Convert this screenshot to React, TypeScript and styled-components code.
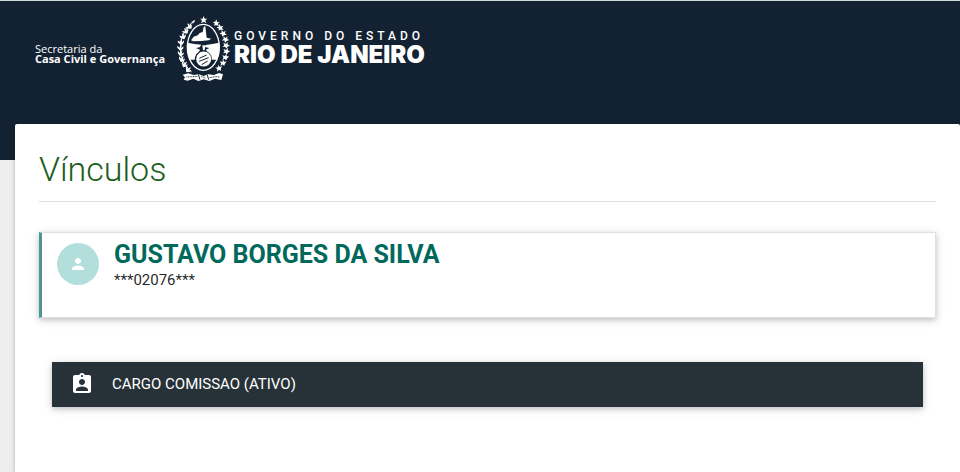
import React from "react";
import styled, { createGlobalStyle } from "styled-components";
import { MdAssignmentInd, MdPerson } from "react-icons/md";

const GlobalStyle = createGlobalStyle`
  *, *::before, *::after { box-sizing: border-box; }
  body {
    margin: 0;
    background: #eeeeee;
    color: rgba(0, 0, 0, 0.87);
    font-family: Roboto, "Liberation Sans", sans-serif;
    font-size: 15px;
    line-height: 22px;
  }
`;

const Header = styled.header`
  display: flex;
  align-items: flex-start;
  height: 160px;
  padding: 15px 35px 0;
  border-top: 1px solid #cfd8dc;
  background: #132232;
  color: #fff;
`;

const Department = styled.p`
  width: 142px;
  margin: 28px 0 0;
  font-family: "Open Sans", sans-serif;
  font-size: 11px;
  line-height: 10px;
  white-space: nowrap;

  strong {
    display: block;
    font-weight: 700;
  }
`;

const Emblem = styled.svg`
  flex: none;
  width: 53px;
  height: 65px;
`;

const State = styled.div`
  margin: 13px 0 0 4px;
  white-space: nowrap;
  font-family: Inter, sans-serif;
`;

const StateCaption = styled.div`
  font-family: Roboto, sans-serif;
  font-size: 12px;
  font-weight: 500;
  line-height: 15px;
  letter-spacing: 4px;
`;

const StateName = styled.div`
  font-size: 24px;
  font-weight: 900;
  line-height: 22px;
`;

const Panel = styled.main`
  position: relative;
  min-height: calc(100vh - 124px);
  margin: -36px 0 0 15px;
  padding: 24px;
  border-radius: 2px 2px 0 0;
  background: #fff;
  box-shadow: 0 2px 2px 0 rgba(0, 0, 0, 0.14), 0 3px 1px -2px rgba(0, 0, 0, 0.12),
    0 1px 5px 0 rgba(0, 0, 0, 0.2);
`;

const Title = styled.h1`
  margin: 0 0 30px;
  padding: 0 0 11px;
  border-bottom: 1px solid #dddddd;
  color: #1b5e20;
  font-size: 34px;
  font-weight: 300;
  line-height: 42px;
`;

const shadow = `0 2px 5px 0 rgba(0, 0, 0, 0.16), 0 2px 10px 0 rgba(0, 0, 0, 0.12)`;

const Person = styled.section`
  display: flex;
  gap: 15px;
  min-height: 86px;
  padding: 10px 15px;
  border: 1px solid #e0e0e0;
  border-left: 3px solid #4a978c;
  box-shadow: ${shadow};
`;

const Avatar = styled.div`
  display: flex;
  flex: none;
  align-items: center;
  justify-content: center;
  width: 42px;
  height: 42px;
  border-radius: 50%;
  background: #b2dfdb;
  color: #fff;
  font-size: 18px;
`;

const PersonName = styled.h2`
  margin: 0;
  color: #00695c;
  font-size: 25px;
  font-weight: 700;
  line-height: 24px;
`;

const Document = styled.p`
  margin: 2px 0 0;
  font-weight: 400;
`;

const Bond = styled.button`
  display: flex;
  align-items: center;
  gap: 18px;
  width: calc(100% - 26px);
  min-height: 45px;
  margin: 44px 13px 0;
  padding: 0 18px 2px;
  border: 0;
  background: #263238;
  color: #fff;
  font: inherit;
  text-align: left;
  box-shadow: ${shadow};
  cursor: pointer;
`;

const leaves = [
  [138, 40, 45], [150, 54, 30], [159, 71, 20], [166, 89, 8], [168, 107, 0],
  [169, 125, -5], [166, 143, -12], [159, 160, -22], [147, 176, -35],
];

const leftLeaves = [
  [58, 50, -42], [47, 64, -30], [39, 80, -20], [33, 97, -8], [31, 114, 0],
  [32, 131, 7], [35, 148, 15], [43, 164, 26], [54, 179, 38],
];

function Arms() {
  return (
    <Emblem viewBox="21 18 159 195" role="img" aria-label="Brasão do Estado do Rio de Janeiro">
      <path fill="#fff" d="m101 18 3 8h8l-6 5 3 9-8-5-8 5 3-9-6-5h8z" />
      <ellipse cx="100" cy="112" rx="48" ry="69" fill="#132232" stroke="#fff" strokeWidth="4" />
      <path d="M71 32C44 60 31 82 31 112c0 30 11 53 34 74" fill="none" stroke="#fff" strokeWidth="3" />
      <g fill="#fff">
        {leaves.map(([x, y, r]) => (
          <path key={y} transform={`translate(${x} ${y}) rotate(${r})`} d="M0 9-2 3-10 4-5-2-8-9 0-5 5-11 5-3 12-1 5 3Z" />
        ))}
        {leftLeaves.map(([x, y, r]) => (
          <path key={y} transform={`translate(${x} ${y}) rotate(${r})`} d="M-1 8-9-1-9-7-2-1 1-10 4-10 3 0 9-5 9 1 2 8Z" />
        ))}
        <path d="m67 37 6-7 2 3-7 9z" />
        <path d="M101 50l5-1 2 18 2 16 14 3-8 5-22 2-24 1-7-3 8-11 12-4 6-7 9-3z" />
        <path d="M53 98l20 4 21 2-5 8-11 2 12 5-2 5-9 8-4 10-1 7H58q-8-26-5-51zM147 98l-20 4-20 3-3 6 14 3-10 5 2 5 9 8 4 10 1 7h18q8-26 5-51z" />
        <path d="M97 106h9l-2 15h-5z" />
        <circle cx="101" cy="147" r="23" />
      </g>
      <circle cx="101" cy="147" r="24" fill="none" stroke="#132232" strokeWidth="2" />
      <path d="m88 145 22-10m-23 19 29-11m-21 21 18-11" fill="none" stroke="#132232" strokeWidth="3" />
      <path fill="#fff" d="m38 194 17-4 16 5 15-2 15 5 14-5 17 2 15-6 12 4-5 17-19-4-17 7-17-5-16 5-15-7-17 6-12-3 4-7z" />
      <path fill="none" stroke="#132232" strokeWidth="3" strokeDasharray="3 2" d="m49 201 16-1 17-1m12 0 12 5m13-1 16-3 15 1" />
      <path fill="none" stroke="#132232" strokeWidth="3" d="m85 193 5 16m22-14 4 14" />
    </Emblem>
  );
}

export default function App() {
  return (
    <>
      <GlobalStyle />
      <Header>
        <Department>
          Secretaria da
          <strong>Casa Civil e Governança</strong>
        </Department>
        <Arms />
        <State>
          <StateCaption>GOVERNO DO ESTADO</StateCaption>
          <StateName>RIO DE JANEIRO</StateName>
        </State>
      </Header>
      <Panel>
        <Title>Vínculos</Title>
        <Person>
          <Avatar>
            <MdPerson aria-hidden />
          </Avatar>
          <div>
            <PersonName>GUSTAVO BORGES DA SILVA</PersonName>
            <Document>***02076***</Document>
          </div>
        </Person>
        <Bond type="button">
          <MdAssignmentInd size={24} aria-hidden />
          CARGO COMISSAO (ATIVO)
        </Bond>
      </Panel>
    </>
  );
}
